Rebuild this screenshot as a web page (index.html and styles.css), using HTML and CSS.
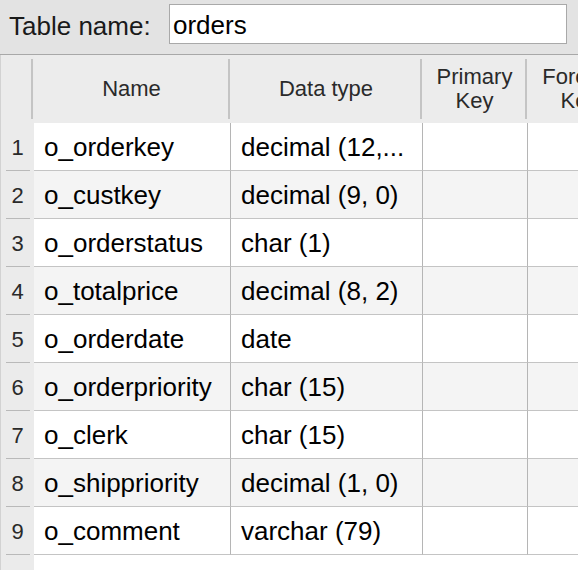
FILE: index.html
```html
<!DOCTYPE html>
<html>
<head>
<meta charset="utf-8">
<link rel="stylesheet" href="styles.css">
</head>
<body>
<div class="topbar">
  <label class="tn-label">Table name:</label>
  <div class="tn-input">orders</div>
</div>
<div class="grid">
  <div class="hdr num"></div>
  <div class="hdr"><span>Name</span></div>
  <div class="hdr"><span>Data type</span></div>
  <div class="hdr"><span>Primary<br>Key</span></div>
  <div class="hdr"><span>Foreign<br>Key</span></div>

  <div class="num"><span>1</span></div><div class="cell">o_orderkey</div><div class="cell">decimal (12,...</div><div class="cell"></div><div class="cell"></div>
  <div class="num alt"><span>2</span></div><div class="cell alt">o_custkey</div><div class="cell alt">decimal (9, 0)</div><div class="cell alt"></div><div class="cell alt"></div>
  <div class="num"><span>3</span></div><div class="cell">o_orderstatus</div><div class="cell">char (1)</div><div class="cell"></div><div class="cell"></div>
  <div class="num alt"><span>4</span></div><div class="cell alt">o_totalprice</div><div class="cell alt">decimal (8, 2)</div><div class="cell alt"></div><div class="cell alt"></div>
  <div class="num"><span>5</span></div><div class="cell">o_orderdate</div><div class="cell">date</div><div class="cell"></div><div class="cell"></div>
  <div class="num alt"><span>6</span></div><div class="cell alt">o_orderpriority</div><div class="cell alt">char (15)</div><div class="cell alt"></div><div class="cell alt"></div>
  <div class="num"><span>7</span></div><div class="cell">o_clerk</div><div class="cell">char (15)</div><div class="cell"></div><div class="cell"></div>
  <div class="num alt"><span>8</span></div><div class="cell alt">o_shippriority</div><div class="cell alt">decimal (1, 0)</div><div class="cell alt"></div><div class="cell alt"></div>
  <div class="num"><span>9</span></div><div class="cell">o_comment</div><div class="cell">varchar (79)</div><div class="cell"></div><div class="cell"></div>

  <div class="num filler"></div><div class="filler-data"></div>
</div>
</body>
</html>
```
FILE: styles.css
```css
html, body {
  margin: 0;
  padding: 0;
  width: 578px;
  height: 570px;
  overflow: hidden;
  background: #ffffff;
  font-family: "Liberation Sans", Arial, sans-serif;
}

.topbar {
  height: 54px;
  background: #e3e3e3;
  border-bottom: 1px solid #a8a8a8;
  display: flex;
  align-items: flex-start;
  box-sizing: border-box;
  height: 55px;
}

.tn-label {
  font-size: 26px;
  color: #1a1a1a;
  margin-left: 9px;
  margin-top: 11px;
  width: 160px;
}

.tn-input {
  margin-top: 4px;
  width: 398px;
  height: 40px;
  box-sizing: border-box;
  border: 1px solid #a9a9a9;
  background: #ffffff;
  font-size: 26px;
  color: #000;
  padding-left: 3px;
  padding-top: 7px;
  line-height: 26px;
}

.grid {
  display: grid;
  grid-template-columns: 34px 197px 192px 105px 105px;
  grid-template-rows: 68px repeat(9, 48px) 1fr;
  height: 515px;
  overflow: hidden;
  width: 633px;
}

.hdr {
  background: #ececec;
  position: relative;
  display: flex;
  align-items: center;
  justify-content: center;
  text-align: center;
  font-size: 22px;
  line-height: 24px;
  color: #2a2a2a;
  border-right: 2px solid transparent;
}

.hdr::after {
  content: "";
  position: absolute;
  right: -1px;
  top: 4px;
  bottom: 4px;
  width: 2px;
  background: #c4c4c4;
}

.hdr span {
  white-space: nowrap;
}

.num {
  background: #ebebeb;
  border-left: 1px solid #d2d2d2;
  position: relative;
  display: flex;
  align-items: center;
  justify-content: center;
  font-size: 22px;
  color: #2a2a2a;
  padding-top: 1px;
  box-sizing: border-box;
}

.hdr.num {
  border-left: 1px solid #d2d2d2;
}

.num:not(.hdr):not(.filler)::before {
  content: "";
  position: absolute;
  left: 5px;
  width: 24px;
  bottom: -1px;
  height: 2px;
  background: #b9b9b9;
}

.cell {
  border-right: 1px solid #b5b5b5;
  border-bottom: 1px solid #c4c4c4;
  display: flex;
  align-items: center;
  padding-left: 10px;
  font-size: 26px;
  color: #000;
  white-space: nowrap;
  overflow: hidden;
  box-sizing: border-box;
  padding-top: 2px;
  background: #ffffff;
}

.cell.alt {
  background: #f4f4f4;
}

.filler-data {
  grid-column: 2 / 6;
  background: #ffffff;
}
```
